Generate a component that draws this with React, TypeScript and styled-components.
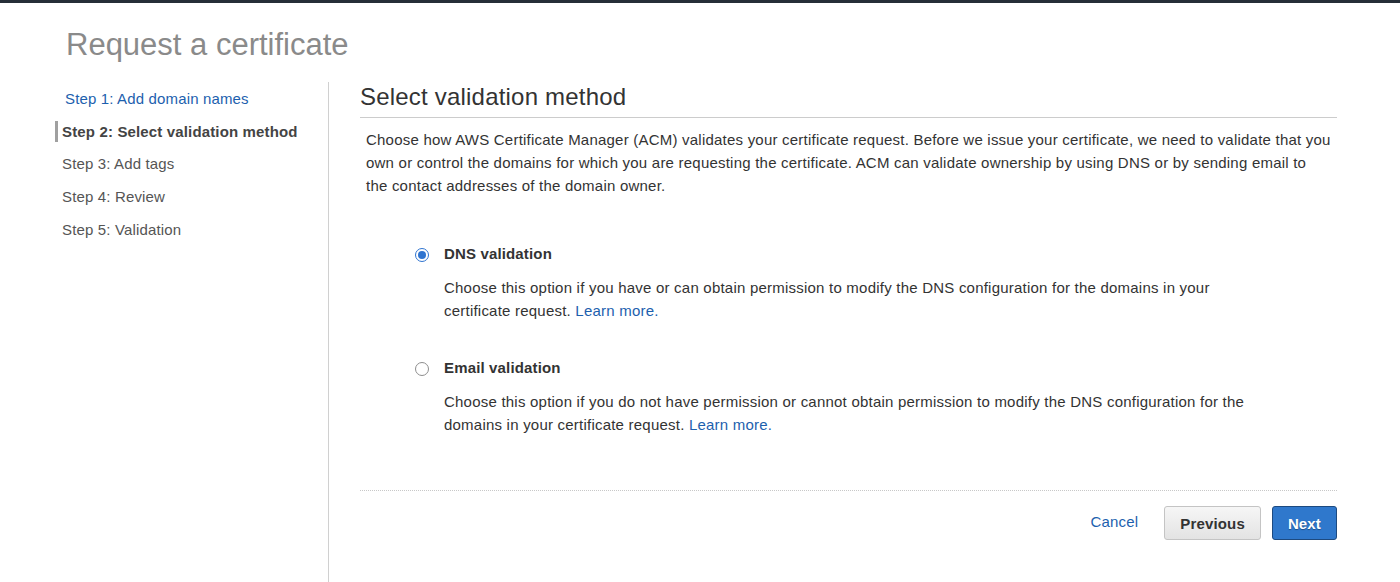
import React from "react";
import styled, { createGlobalStyle } from "styled-components";

const Global = createGlobalStyle`
  html, body { margin: 0; padding: 0; background: #fff; }
  body { font-family: "Liberation Sans", Arial, Helvetica, sans-serif; color: #333; }
  * { box-sizing: border-box; }
`;

const Page = styled.div`
  display: flex;
  flex-direction: column;
  height: 582px;
  overflow: hidden;
`;

const TopBar = styled.div`
  height: 3px;
  background: #262e38;
  flex: none;
`;

const Title = styled.h1`
  margin: 24px 0 0 66px;
  font-size: 31px;
  line-height: 36px;
  font-weight: 400;
  color: #8a8a8a;
  flex: none;
`;

const Body = styled.div`
  display: flex;
  flex: 1;
  margin-top: 19px;
`;

const Sidebar = styled.nav`
  width: 274px;
  margin-left: 55px;
  border-right: 1px solid #d0d0d0;
  display: flex;
  flex-direction: column;
`;

const StepWrap = styled.div`
  height: 32.75px;
  display: flex;
  align-items: center;
`;

const Step = styled.div<{ $active?: boolean; $link?: boolean }>`
  font-size: 15px;
  line-height: 19px;
  letter-spacing: 0.15px;
  padding: 1px 0 1px ${(p) => (p.$link ? "10px" : p.$active ? "4px" : "7px")};
  border-left: ${(p) => (p.$active ? "3px solid #a0a0a0" : "none")};
  font-weight: ${(p) => (p.$active ? 700 : 400)};
  color: ${(p) => (p.$link ? "#1d5fae" : p.$active ? "#444" : "#555")};
`;

const Main = styled.main`
  width: 977px;
  margin-left: 31px;
  display: flex;
  flex-direction: column;
`;

const Heading = styled.h2`
  margin: 1px 0 0 0;
  font-size: 24px;
  line-height: 28px;
  letter-spacing: 0.2px;
  font-weight: 400;
  color: #333;
  padding-bottom: 6px;
  border-bottom: 1px solid #cccccc;
`;

const Intro = styled.p`
  margin: 10px 0 0 0;
  padding: 0 6px;
  font-size: 15px;
  line-height: 23px;
  letter-spacing: 0.22px;
  color: #333;
`;

const Options = styled.div`
  display: flex;
  flex-direction: column;
  gap: 34px;
  margin-top: 45px;
  padding-left: 55px;
`;

const Option = styled.label`
  display: grid;
  grid-template-columns: 14px 1fr;
  column-gap: 15px;
  row-gap: 11px;
  align-items: center;
`;

const Radio = styled.span<{ $checked?: boolean }>`
  width: 14px;
  height: 14px;
  border-radius: 50%;
  border: ${(p) => (p.$checked ? "1.5px solid #2f74d0" : "1px solid #8e8e8e")};
  background: #fff;
  display: flex;
  align-items: center;
  justify-content: center;
  margin-top: 2px;
  &::after {
    content: "";
    width: 8px;
    height: 8px;
    border-radius: 50%;
    background: ${(p) => (p.$checked ? "#2f74d0" : "transparent")};
  }
`;

const OptionLabel = styled.span`
  font-size: 15px;
  line-height: 23px;
  letter-spacing: 0.15px;
  font-weight: 700;
  color: #333;
`;

const OptionDesc = styled.p`
  grid-column: 2;
  margin: 0;
  max-width: 822px;
  font-size: 15px;
  line-height: 23px;
  letter-spacing: 0.22px;
  color: #333;
`;

const Link = styled.a`
  color: #1d5fae;
  text-decoration: none;
`;

const Footer = styled.div`
  margin-top: 54px;
  border-top: 1px dotted #c8c8c8;
  display: flex;
  justify-content: flex-end;
  align-items: center;
  padding-top: 15px;
`;

const CancelLink = styled.a`
  font-size: 15px;
  letter-spacing: 0.2px;
  color: #1d5fae;
  margin-right: 26px;
  margin-top: -3px;
`;

const Button = styled.button<{ $primary?: boolean }>`
  height: 34px;
  padding: 0 15px;
  font-family: inherit;
  font-size: 15px;
  letter-spacing: 0.15px;
  font-weight: 700;
  border-radius: 3px;
  cursor: pointer;
  color: ${(p) => (p.$primary ? "#fff" : "#333")};
  border: 1px solid ${(p) => (p.$primary ? "#1d4a80" : "#c4c4c4")};
  background: ${(p) =>
    p.$primary ? "#2f78cc" : "linear-gradient(#f6f6f6, #e3e3e3)"};
  text-shadow: ${(p) => (p.$primary ? "0 1px 1px rgba(0,0,0,0.35)" : "none")};
  & + & {
    margin-left: 11px;
  }
`;

export default function App() {
  return (
    <Page>
      <Global />
      <TopBar />
      <Title>Request a certificate</Title>
      <Body>
        <Sidebar>
          <StepWrap><Step $link>Step 1: Add domain names</Step></StepWrap>
          <StepWrap><Step $active>Step 2: Select validation method</Step></StepWrap>
          <StepWrap><Step>Step 3: Add tags</Step></StepWrap>
          <StepWrap><Step>Step 4: Review</Step></StepWrap>
          <StepWrap><Step>Step 5: Validation</Step></StepWrap>
        </Sidebar>
        <Main>
          <Heading>Select validation method</Heading>
          <Intro>
            Choose how AWS Certificate Manager (ACM) validates your certificate request. Before we issue your
            certificate, we need to validate that you own or control the domains for which you are requesting the
            certificate. ACM can validate ownership by using DNS or by sending email to the contact addresses of the
            domain owner.
          </Intro>
          <Options>
            <Option>
              <Radio $checked />
              <OptionLabel>DNS validation</OptionLabel>
              <OptionDesc>
                <span>
                  Choose this option if you have or can obtain permission to modify the DNS configuration for the
                  domains in your certificate request.
                </span>{" "}
                <Link>Learn more.</Link>
              </OptionDesc>
            </Option>
            <Option>
              <Radio />
              <OptionLabel>Email validation</OptionLabel>
              <OptionDesc>
                <span>
                  Choose this option if you do not have permission or cannot obtain permission to modify the DNS
                  configuration for the domains in your certificate request.
                </span>{" "}
                <Link>Learn more.</Link>
              </OptionDesc>
            </Option>
          </Options>
          <Footer>
            <CancelLink>Cancel</CancelLink>
            <Button>Previous</Button>
            <Button $primary>Next</Button>
          </Footer>
        </Main>
      </Body>
    </Page>
  );
}
